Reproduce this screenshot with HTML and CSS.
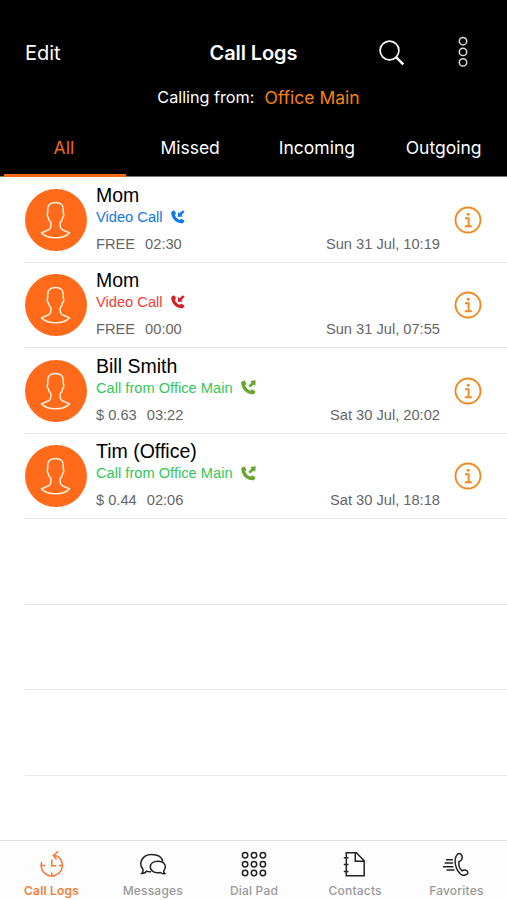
FILE: index.html
```html
<!DOCTYPE html>
<html lang="en">
<head>
<meta charset="utf-8">
<title>Call Logs</title>
<link rel="stylesheet" href="styles.css">
</head>
<body>
<svg class="defs" width="0" height="0">
  <symbol id="person" viewBox="0 0 32 40">
    <path d="M15.500 2.500C10.300 2.500 7.700 5 7.700 9.500v3.800c-.9.600-.6 3.300.5 4 .5 2.600 1.500 4.300 2.800 5.700 0 2.500-.1 4.400-1 5.600-1.600 2-5.500 2.500-8.500 4.200 5.500 6.700 22.500 6.700 28 0-3-1.700-6.900-2.200-8.500-4.200-.9-1.200-1-3.100-1-5.600 1.300-1.400 2.300-3.100 2.800-5.700 1.100-.7 1.400-3.400.5-4V9.500c0-4.500-2.600-7-7.800-7z"/>
  </symbol>
  <symbol id="handset" viewBox="0 0 14 14">
    <path d="M.9 1.400 2.400.6c.6-.3 1.100-.1 1.400.5l1 2c.2.500.1.900-.3 1.200l-.7.700c.9 2.300 2.500 4 4.900 5l.9-.9c.3-.4.800-.4 1.200-.2l2.200 1.300c.5.300.6.700.3 1.200l-.8 1.200c-.3.500-.8.800-1.400.8C5.200 13.400.4 8.600.2 2.600c0-.5.300-1 .7-1.200z"/>
  </symbol>
  <symbol id="incoming" viewBox="0 0 14 14">
    <use href="#handset"/>
    <path d="m13.600 1.800-3.100 3.100 1.300 1.500-5 .5.300-5 1.500 1.300L11.900.3z"/>
  </symbol>
  <symbol id="outgoing" viewBox="0 0 14 14">
    <use href="#handset"/>
    <path d="m6.900 5.300 3-3L8.600.9l5.100-.6-.4 5.200-1.500-1.400-3.200 3z"/>
  </symbol>
  <symbol id="info" viewBox="0 0 28 28">
    <circle cx="14" cy="14" r="12.500"/>
    <path d="M11 12.300h3.600v7.800M10.800 20.300h7"/>
    <circle class="dot" cx="14.200" cy="8.300" r="1.500"/>
  </symbol>
</svg>

<header class="header">
  <div class="titlebar">
    <span class="edit">Edit</span>
    <h1 class="title">Call Logs</h1>
    <div class="actions">
      <svg class="search" viewBox="0 0 26 26"><circle cx="10.500" cy="10.500" r="9.400"/><path class="handle" d="m17.300 17.300 7 7"/></svg>
      <svg class="more" viewBox="0 0 10 32"><circle cx="5" cy="5.200" r="3.700"/><circle cx="5" cy="15.900" r="3.700"/><circle cx="5" cy="26.400" r="3.700"/></svg>
    </div>
  </div>
  <div class="calling"><span>Calling from:</span><span class="office">Office Main</span></div>
  <nav class="tabs">
    <span class="tab active">All</span>
    <span class="tab">Missed</span>
    <span class="tab">Incoming</span>
    <span class="tab">Outgoing</span>
  </nav>
</header>

<main class="list">
  <article class="row">
    <div class="avatar"><svg><use href="#person"/></svg></div>
    <div class="body">
      <div class="name">Mom</div>
      <div class="kind blue"><span>Video Call</span><svg><use href="#incoming"/></svg></div>
      <div class="meta"><span>FREE</span><span>02:30</span><time>Sun 31 Jul, 10:19</time></div>
    </div>
    <svg class="info"><use href="#info"/></svg>
  </article>
  <article class="row">
    <div class="avatar"><svg><use href="#person"/></svg></div>
    <div class="body">
      <div class="name">Mom</div>
      <div class="kind red"><span>Video Call</span><svg><use href="#incoming"/></svg></div>
      <div class="meta"><span>FREE</span><span>00:00</span><time>Sun 31 Jul, 07:55</time></div>
    </div>
    <svg class="info"><use href="#info"/></svg>
  </article>
  <article class="row">
    <div class="avatar"><svg><use href="#person"/></svg></div>
    <div class="body">
      <div class="name">Bill Smith</div>
      <div class="kind green"><span>Call from Office Main</span><svg><use href="#outgoing"/></svg></div>
      <div class="meta"><span>$ 0.63</span><span>03:22</span><time>Sat 30 Jul, 20:02</time></div>
    </div>
    <svg class="info"><use href="#info"/></svg>
  </article>
  <article class="row">
    <div class="avatar"><svg><use href="#person"/></svg></div>
    <div class="body">
      <div class="name">Tim (Office)</div>
      <div class="kind green"><span>Call from Office Main</span><svg><use href="#outgoing"/></svg></div>
      <div class="meta"><span>$ 0.44</span><span>02:06</span><time>Sat 30 Jul, 18:18</time></div>
    </div>
    <svg class="info"><use href="#info"/></svg>
  </article>
  <div class="row"></div>
  <div class="row"></div>
  <div class="row"></div>
</main>

<footer class="tabbar">
  <div class="item current">
    <svg viewBox="0 0 28 28"><path d="M3.700 11.800A10.700 10.700 0 1 0 20.300 6.800Q18.300 5.200 15.300 5.500M20.200 1.300 15.300 5.500 18.500 9.300M13.800 9.500v6.300h4.500M13.800 22.400v3.500M3.500 15.500h3.500M21 15.500h3.500"/></svg>
    <span>Call Logs</span>
  </div>
  <div class="item">
    <svg viewBox="0 0 28 28"><path d="M12 21.700c-1.500.3-3.200.1-4.400-.5-1.100 1.500-3.100 2.300-4.800 2.300 1.200-1.300 1.400-3 1.100-4.400C-.6 14.100 2.500 4.500 12.500 4.400c7 0 10.400 3 11.300 6.900"/><path d="M24.800 20.600c3.400-4.300.7-9.300-5.800-9.300-5.400 0-7.700 2.800-7.700 5.700 0 3.800 4.400 6.900 10 5.500 1.300 1 2.900 1.500 4.500 1-1-.8-1.300-1.700-1-2.900z"/></svg>
    <span>Messages</span>
  </div>
  <div class="item">
    <svg viewBox="0 0 28 28"><g><circle cx="5.100" cy="5.300" r="2.700"/><circle cx="14" cy="5.300" r="2.700"/><circle cx="22.900" cy="5.300" r="2.700"/><circle cx="5.100" cy="14.200" r="2.700"/><circle cx="14" cy="14.200" r="2.700"/><circle cx="22.900" cy="14.200" r="2.700"/><circle cx="5.100" cy="23" r="2.700"/><circle cx="14" cy="23" r="2.700"/><circle cx="22.900" cy="23" r="2.700"/></g></svg>
    <span>Dial Pad</span>
  </div>
  <div class="item">
    <svg viewBox="0 0 28 28"><path d="M5.300 2.700h10l7.900 8v15.100H5.300zM14.300 2.700v8.500h8.900M2.800 7.700h4.700M2.800 14.500h4.700M2.800 21.500h4.700"/></svg>
    <span>Contacts</span>
  </div>
  <div class="item">
    <svg viewBox="0 0 28 28"><path d="M15.800 4c-4.600 4.500-3.200 16 4.200 21 1.900.9 4.800-.2 5.900-1.900.3-1.800-1.700-3.400-4-3l-1.800.7c-3-2.500-3.700-6-3.100-9.200 2.500-.8 3.500-2.600 3.200-5.200-.4-2.300-2.700-3.400-4.400-2.400zM4 9.800h6.800M2.700 13.100h8.400M.9 16.800h10.500M4.500 20.100h8"/></svg>
    <span>Favorites</span>
  </div>
</footer>
</body>
</html>
```
FILE: styles.css
```css
* {
  box-sizing: border-box;
}

body {
  margin: 0;
  width: 507px;
  height: 900px;
  overflow: hidden;
  display: flex;
  flex-direction: column;
  background: #fff;
  font-family: "Liberation Sans", Arial, sans-serif;
}

.defs {
  position: absolute;
}

.header {
  height: 177px;
  flex: none;
  padding-top: 32px;
  background: #000;
  border-bottom: 1px solid #777;
  color: #fff;
  font-family: Inter, sans-serif;
}

.titlebar {
  height: 40px;
  display: grid;
  grid-template-columns: 1fr auto 1fr;
  align-items: center;
  padding: 0 39px 0 25px;
}

.edit {
  padding-top: 1px;
  font-size: 20px;
}

.title {
  margin: 0 0 0 14px;
  padding-top: 1px;
  font-size: 20px;
  font-weight: 600;
  letter-spacing: -0.100px;
}

.actions {
  display: flex;
  align-items: center;
  justify-content: flex-end;
  gap: 53px;
}

.actions svg {
  fill: none;
  stroke: #fff;
  stroke-width: 1.700;
}

.search {
  width: 26px;
  height: 26px;
  margin-top: 1px;
}

.search .handle {
  stroke-width: 2.600;
}

.actions .more {
  width: 10px;
  height: 32px;
  stroke: #ddd;
  stroke-width: 1.500;
}

.calling {
  height: 50px;
  display: flex;
  align-items: center;
  justify-content: center;
  gap: 10px;
  padding-left: 10px;
  font-size: 16.200px;
}

.office {
  color: #f68212;
  font-size: 17.500px;
}

.tabs {
  height: 54px;
  display: grid;
  grid-template-columns: repeat(4, 1fr);
}

.tab {
  height: 55px;
  line-height: 51px;
  text-align: center;
  font-size: 17.500px;
}

.active {
  margin: 0 1px 0 4px;
  padding-right: 2px;
  border-bottom: 3px solid #f26a16;
  color: #f26a16;
}

.list {
  flex: 1;
  padding: 0 0 0 25px;
}

.row {
  height: 85.500px;
  display: flex;
  border-bottom: 1px solid #e6e6e8;
}

.avatar {
  width: 62px;
  height: 62px;
  margin-top: 11.500px;
  display: flex;
  align-items: center;
  justify-content: center;
  border-radius: 50%;
  background: #ff6b1b;
}

.avatar svg {
  width: 32px;
  height: 40px;
  fill: none;
  stroke: #fff0dc;
  stroke-width: 1.500;
}

.body {
  width: 344px;
  margin-left: 9px;
  padding-top: 6.700px;
}

.name {
  height: 23px;
  line-height: 23px;
  color: #000;
  font-size: 19.500px;
}

.kind {
  height: 20px;
  display: flex;
  align-items: center;
  gap: 8px;
  font-size: 14.660px;
}

.kind svg {
  width: 14px;
  height: 14px;
  fill: currentColor;
}

.blue {
  color: #1278e8;
}

.red {
  color: #f23c38;
}

.red svg {
  color: #d62027;
}

.green {
  color: #34c759;
}

.green svg {
  width: 15px;
  height: 15px;
  color: #67a52e;
}

.meta {
  height: 20px;
  margin-top: 7px;
  display: flex;
  align-items: center;
  gap: 10px;
  color: #666;
  font-size: 14.660px;
}

.meta time {
  margin-left: auto;
}

.info {
  width: 28px;
  height: 28px;
  margin: 28.500px 0 0 14px;
  fill: none;
  stroke: #f08a20;
  stroke-width: 1.900;
}

.dot {
  fill: #f08a20;
  stroke: none;
}

.tabbar {
  height: 60px;
  flex: none;
  display: grid;
  grid-template-columns: repeat(5, 1fr);
  padding-left: 1px;
  border-top: 1px solid #ddd;
  background: #fdfdfd;
  font-family: Inter, sans-serif;
}

.item {
  display: flex;
  flex-direction: column;
  align-items: center;
  padding-top: 9px;
  color: #999;
  font-size: 12px;
  font-weight: 500;
  letter-spacing: 0.200px;
}

.item svg {
  width: 28px;
  height: 28px;
  fill: none;
  stroke: #222;
  stroke-width: 1.500;
}

.item span {
  margin-top: 5px;
  line-height: 16px;
}

.current {
  color: #f5803a;
  font-weight: 600;
}

.current svg {
  stroke: #f57630;
}
```
